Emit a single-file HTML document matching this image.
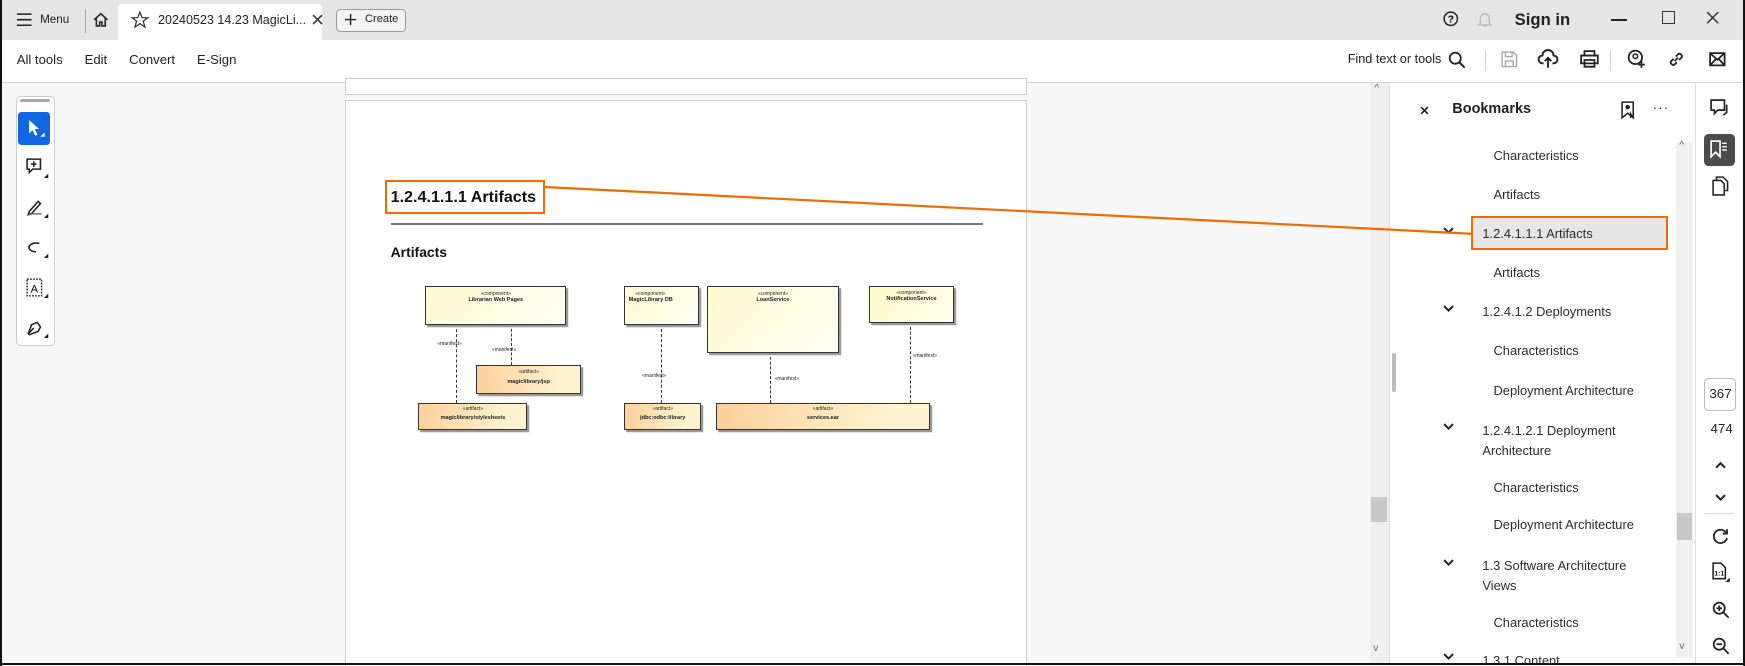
<!DOCTYPE html>
<html><head><meta charset="utf-8"><style>
*{box-sizing:border-box;margin:0;padding:0}
html,body{width:1745px;height:665px;overflow:hidden;background:#000}
#w{position:absolute;left:0;top:0;width:1568px;height:598px;zoom:1.11288;background:#f8f8f8;font-family:"Liberation Sans",sans-serif;color:#222;overflow:hidden}
.a{position:absolute}
.t{position:absolute;white-space:nowrap}
svg{position:absolute;overflow:visible}
.bm{position:absolute;font-size:11.6px;color:#2c2c2c;white-space:nowrap}
.comp{position:absolute;border:1px solid #333;background:linear-gradient(135deg,#fffbd0,#fffff4);box-shadow:2px 2px 0 #999;font-size:5px;text-align:center;font-weight:bold}
.art{position:absolute;border:1px solid #333;background:linear-gradient(90deg,#fdd09a,#fff3d0 80%);box-shadow:2px 2px 0 #999;font-size:5px;text-align:center;font-weight:bold}
.st{font-weight:normal;font-size:4.5px;display:block;margin-top:2px}
.dl{position:absolute;width:0;border-left:1px dashed #333}
.mf{position:absolute;font-size:4.5px}
</style></head><body><div id="w">
<div class="a" style="left:0;top:0;width:1568px;height:36px;background:#e6e6e6"></div>
<svg style="left:15px;top:12px" width="14" height="12"><path d="M0 1H13M0 6H13M0 11H13" stroke="#222" stroke-width="1.4"/></svg>
<div class="t" style="left:36px;top:12px;font-size:10.5px">Menu</div>
<div class="a" style="left:76px;top:8px;width:1px;height:22px;background:#aaa"></div>
<svg style="left:84px;top:11px" width="14" height="14"><path d="M1 7L7 1.5L13 7M3 5.5V12.5H6V9H8V12.5H11V5.5" fill="none" stroke="#222" stroke-width="1.4"/></svg>
<div class="a" style="left:106px;top:4px;width:183px;height:32px;background:#fff;border-radius:4px 4px 0 0"></div>
<svg style="left:118px;top:10px" width="16" height="16"><path d="M8 1L10 6H15L11 9.2L12.5 14.5L8 11.3L3.5 14.5L5 9.2L1 6H6Z" fill="none" stroke="#333" stroke-width="1.1"/></svg>
<div class="t" style="left:142px;top:12px;font-size:11.3px">20240523 14.23 MagicLi...</div>
<svg style="left:280px;top:13px" width="10" height="10"><path d="M1 1L9 9M9 1L1 9" stroke="#444" stroke-width="1.6"/></svg>
<div class="a" style="left:302px;top:8px;width:63px;height:21px;border:1px solid #999;border-radius:4px;background:#f3f3f3"></div>
<svg style="left:310px;top:13px" width="10" height="10"><path d="M5 0V10M0 5H10" stroke="#222" stroke-width="1.3"/></svg>
<div class="t" style="left:328px;top:12px;font-size:10px">Create</div>
<svg style="left:1297px;top:10px" width="14" height="14"><circle cx="7" cy="7" r="6" fill="none" stroke="#222" stroke-width="1.3"/><text x="7" y="10.5" font-size="9" text-anchor="middle" font-family="Liberation Sans" font-weight="bold">?</text></svg>
<svg style="left:1327px;top:10px" width="14" height="15"><path d="M3 11V6.5A4 4 0 0 1 11 6.5V11L12.5 12.5H1.5ZM5.5 13.5H8.5" fill="none" stroke="#bbb" stroke-width="1.2"/></svg>
<div class="t" style="left:1361px;top:9px;font-size:15px;font-weight:bold">Sign in</div>
<div class="a" style="left:1448px;top:17px;width:14px;height:1.5px;background:#222"></div>
<div class="a" style="left:1493px;top:10px;width:12px;height:12px;border:1.3px solid #333"></div>
<svg style="left:1533px;top:10px" width="12" height="12"><path d="M1 1L11 11M11 1L1 11" stroke="#333" stroke-width="1.3"/></svg>
<div class="a" style="left:0;top:36px;width:1568px;height:39px;background:#fff;border-bottom:1px solid #d4d4d4"></div>
<div class="t" style="left:15px;top:47px;font-size:11.8px">All tools</div>
<div class="t" style="left:76px;top:47px;font-size:11.8px">Edit</div>
<div class="t" style="left:116px;top:47px;font-size:11.8px">Convert</div>
<div class="t" style="left:177px;top:47px;font-size:11.8px">E-Sign</div>
<div class="t" style="left:1211px;top:47px;font-size:11.4px">Find text or tools</div>
<svg style="left:1301px;top:46px" width="16" height="16"><circle cx="6.5" cy="6.5" r="5" fill="none" stroke="#222" stroke-width="1.6"/><path d="M10 10L15 15" stroke="#222" stroke-width="1.8"/></svg>
<div class="a" style="left:1334px;top:45px;width:1px;height:19px;background:#ccc"></div>
<svg style="left:1349px;top:46px" width="15" height="15"><path d="M1 1H11L14 4V14H1ZM4 1V5H10V1M4 14V9H11V14" fill="none" stroke="#aaa" stroke-width="1.3"/></svg>
<svg style="left:1382px;top:45px" width="18" height="17"><path d="M5 12H4A3.5 3.5 0 0 1 4 5A5 5 0 0 1 14 5A3.5 3.5 0 0 1 14 12H13M9 16V7M6 10L9 7L12 10" fill="none" stroke="#222" stroke-width="1.7"/></svg>
<svg style="left:1420px;top:45px" width="17" height="16"><path d="M4 5V1H13V5M1 5H16V12H1ZM4 9H13V15H4Z" fill="none" stroke="#222" stroke-width="1.6"/></svg>
<div class="a" style="left:1447px;top:45px;width:1px;height:19px;background:#ccc"></div>
<svg style="left:1462px;top:44px" width="18" height="18"><circle cx="7.5" cy="7.5" r="6" fill="none" stroke="#222" stroke-width="1.6"/><circle cx="7.5" cy="6.5" r="2" fill="none" stroke="#222" stroke-width="1.4"/><path d="M13 11V17M10 14H16" stroke="#222" stroke-width="1.6"/></svg>
<svg style="left:1499px;top:46px" width="15" height="15"><path d="M6 9L9 6M5 7L2.5 9.5A2.5 2.5 0 0 0 5.5 12.5L8 10M7 5L9.5 2.5A2.5 2.5 0 0 1 12.5 5.5L10 8" fill="none" stroke="#222" stroke-width="1.6"/></svg>
<svg style="left:1536px;top:47px" width="15" height="13"><path d="M1 1H14V12H1ZM1 1L7.5 7L14 1M1 12L6 6.5M14 12L9 6.5" fill="none" stroke="#222" stroke-width="1.6"/></svg>
<div class="a" style="left:14px;top:86px;width:35px;height:225px;border:1px solid #ccc;border-radius:4px;background:#fff"></div>
<div class="a" style="left:18px;top:89px;width:27px;height:3px;border-radius:2px;background:#aaa"></div>
<div class="a" style="left:16px;top:101px;width:29px;height:29px;border-radius:3px;background:#1167df"></div>
<svg style="left:25px;top:107px" width="16" height="18"><path d="M1 1V13L4 10L6.5 15L8.5 14L6 9H10Z" fill="#fff"/><path d="M15 12V16H11Z" fill="#fff"/></svg>
<svg style="left:23px;top:142px" width="22" height="20"><path d="M1 1H13V10H6L3 13V10H1Z" fill="none" stroke="#222" stroke-width="1.4"/><path d="M7 3V8M4.5 5.5H9.5" stroke="#222" stroke-width="1.4"/><path d="M20 14V18H16Z" fill="#222"/></svg>
<svg style="left:23px;top:178px" width="22" height="20"><path d="M3 12L11 3L13 5L5 14L2 15Z" fill="none" stroke="#222" stroke-width="1.4"/><path d="M1 15L7 13.5H14V15Z" fill="#888"/><path d="M20 14V18H16Z" fill="#222"/></svg>
<svg style="left:23px;top:214px" width="22" height="20"><path d="M12 5A5.5 3.5 0 1 0 6 12L9 12.5" fill="none" stroke="#222" stroke-width="1.4"/><path d="M20 14V18H16Z" fill="#222"/></svg>
<svg style="left:23px;top:250px" width="22" height="20"><rect x="1" y="1" width="13" height="15" fill="none" stroke="#222" stroke-width="1.3" stroke-dasharray="1.5 1.2"/><text x="7.5" y="13" font-size="10" text-anchor="middle" font-family="Liberation Sans">A</text><path d="M20 14V18H16Z" fill="#222"/></svg>
<svg style="left:23px;top:286px" width="22" height="20"><path d="M2 14L5 6L10 4L13 8L11 12L3 15ZM2 14L7 9" fill="none" stroke="#222" stroke-width="1.4"/><path d="M20 14V18H16Z" fill="#222"/></svg>
<div class="a" style="left:310px;top:70px;width:613px;height:15px;background:#fff;border:1px solid #ccc"></div>
<div class="a" style="left:310px;top:90px;width:613px;height:520px;background:#fff;border:1px solid #ccc"></div>
<div class="a" style="left:346px;top:162px;width:144px;height:30px;border:2px solid #f06c00"></div>
<div class="t" style="left:351px;top:169px;font-size:14.5px;font-weight:bold;color:#111">1.2.4.1.1.1 Artifacts</div>
<div class="a" style="left:351px;top:200px;width:532px;height:2px;background:#777"></div>
<div class="t" style="left:351px;top:219px;font-size:12.5px;font-weight:bold;color:#111">Artifacts</div>
<div class="dl" style="left:410px;top:291px;height:71px"></div>
<div class="dl" style="left:459px;top:291px;height:37px"></div>
<div class="dl" style="left:594px;top:291px;height:71px"></div>
<div class="dl" style="left:692px;top:316px;height:46px"></div>
<div class="dl" style="left:818px;top:289px;height:73px"></div>
<div class="comp" style="left:382px;top:257px;width:127px;height:35px;padding-top:4px"><span class="st" style="margin:0">«component»</span>Librarian Web Pages</div>
<div class="comp" style="left:561px;top:257px;width:67px;height:35px;padding-top:4px;text-align:left;padding-left:3px"><span class="st" style="margin:0;padding-left:6px">«component»</span>MagicLibrary DB</div>
<div class="comp" style="left:635px;top:257px;width:119px;height:60px;padding-top:4px"><span class="st" style="margin:0">«component»</span>LoanService</div>
<div class="comp" style="left:781px;top:257px;width:76px;height:33px;padding-top:3px;background:linear-gradient(135deg,#fffbc8,#fffff0)"><span class="st" style="margin:0">«component»</span>NotificationService</div>
<div class="art" style="left:428px;top:328px;width:94px;height:26px;padding-top:3px"><span class="st" style="margin:0">«artifact»</span><span style="display:block;margin-top:3px">magiclibrary/jsp</span></div>
<div class="art" style="left:376px;top:362px;width:98px;height:24px;padding-top:2px"><span class="st" style="margin:0">«artifact»</span><span style="display:block;margin-top:3px">magiclibrary/stylesheets</span></div>
<div class="art" style="left:561px;top:362px;width:69px;height:24px;padding-top:2px"><span class="st" style="margin:0">«artifact»</span><span style="display:block;margin-top:3px">jdbc:odbc:library</span></div>
<div class="art" style="left:643px;top:362px;width:193px;height:24px;padding-top:2px"><span class="st" style="margin:0">«artifact»</span><span style="display:block;margin-top:3px">services.ear</span></div>
<div class="mf" style="left:393px;top:306px">«manifest»</div>
<div class="mf" style="left:442px;top:312px">«manifest»</div>
<div class="mf" style="left:577px;top:335px">«manifest»</div>
<div class="mf" style="left:696px;top:338px">«manifest»</div>
<div class="mf" style="left:820px;top:317px">«manifest»</div>
<div class="a" style="left:1231px;top:75px;width:17px;height:523px;background:#efefef"></div>
<div class="a" style="left:1232px;top:447px;width:14px;height:22px;background:#c8c8c8"></div>
<div class="t" style="left:1235px;top:75px;font-size:9px;color:#666">^</div>
<div class="t" style="left:1234px;top:578px;font-size:9px;color:#666">v</div>
<div class="a" style="left:1248px;top:75px;width:275px;height:523px;background:#fff;border-left:1px solid #ddd"></div>
<div class="a" style="left:1251px;top:317px;width:3px;height:35px;border-radius:2px;background:#bbb"></div>
<svg style="left:1276px;top:95px" width="8" height="8"><path d="M1 1L7 7M7 1L1 7" stroke="#222" stroke-width="1.5"/></svg>
<div class="t" style="left:1305px;top:91px;font-size:13px;font-weight:bold">Bookmarks</div>
<svg style="left:1457px;top:91px" width="14" height="17"><path d="M1 1H11V15L6 11L1 15Z" fill="none" stroke="#222" stroke-width="1.4"/><circle cx="6" cy="5.5" r="2" fill="#222"/><path d="M8 9V16L10 14L12 16" fill="#222"/></svg>
<div class="t" style="left:1485px;top:90px;font-size:12px;letter-spacing:1px">···</div>
<div class="a" style="left:1506px;top:128px;width:15px;height:462px;background:#f0f0f0"></div>
<div class="a" style="left:1507px;top:461px;width:13px;height:24px;background:#c8c8c8"></div>
<div class="t" style="left:1509px;top:126px;font-size:9px;color:#666">^</div>
<div class="t" style="left:1509px;top:576px;font-size:9px;color:#666">v</div>
<div class="a" style="left:1322px;top:194px;width:177px;height:31px;background:#e6e6e6;border:2px solid #f06c00"></div>
<svg style="left:1297px;top:204px" width="10" height="7"><path d="M1 1L5 5L9 1" fill="none" stroke="#222" stroke-width="1.8"/></svg>
<svg style="left:1297px;top:274px" width="10" height="7"><path d="M1 1L5 5L9 1" fill="none" stroke="#222" stroke-width="1.8"/></svg>
<svg style="left:1297px;top:380px" width="10" height="7"><path d="M1 1L5 5L9 1" fill="none" stroke="#222" stroke-width="1.8"/></svg>
<svg style="left:1297px;top:502px" width="10" height="7"><path d="M1 1L5 5L9 1" fill="none" stroke="#222" stroke-width="1.8"/></svg>
<svg style="left:1297px;top:587px" width="10" height="7"><path d="M1 1L5 5L9 1" fill="none" stroke="#222" stroke-width="1.8"/></svg>
<div class="bm" style="left:1342px;top:133px">Characteristics</div>
<div class="bm" style="left:1342px;top:168px">Artifacts</div>
<div class="bm" style="left:1332px;top:203px">1.2.4.1.1.1 Artifacts</div>
<div class="bm" style="left:1342px;top:238px">Artifacts</div>
<div class="bm" style="left:1332px;top:273px">1.2.4.1.2 Deployments</div>
<div class="bm" style="left:1342px;top:308px">Characteristics</div>
<div class="bm" style="left:1342px;top:344px">Deployment Architecture</div>
<div class="bm" style="left:1332px;top:378px;line-height:18px">1.2.4.1.2.1 Deployment<br>Architecture</div>
<div class="bm" style="left:1342px;top:431px">Characteristics</div>
<div class="bm" style="left:1342px;top:465px">Deployment Architecture</div>
<div class="bm" style="left:1332px;top:500px;line-height:18px">1.3 Software Architecture<br>Views</div>
<div class="bm" style="left:1342px;top:553px">Characteristics</div>
<div class="bm" style="left:1332px;top:587px">1.3.1 Content</div>
<div class="a" style="left:1523px;top:75px;width:45px;height:523px;background:#fff;border-left:1px solid #ddd"></div>
<svg style="left:1537px;top:89px" width="17" height="16"><path d="M1 1H13V10H7L4 13V10H1Z" fill="none" stroke="#222" stroke-width="1.5"/><path d="M15 5V12L12 14.5" fill="none" stroke="#222" stroke-width="1.5"/></svg>
<div class="a" style="left:1531px;top:120px;width:28px;height:29px;border-radius:4px;background:#4b4b4b"></div>
<svg style="left:1537px;top:126px" width="17" height="17"><path d="M1 1H9V15L5 11L1 15Z" fill="none" stroke="#fff" stroke-width="1.5"/><path d="M11 3H15M11 6H15M11 9H15" stroke="#fff" stroke-width="1.3"/></svg>
<svg style="left:1538px;top:158px" width="15" height="18"><path d="M4 4V1H10L14 5V13H11M1 4H8L11 7V17H1Z" fill="none" stroke="#222" stroke-width="1.4"/></svg>
<div class="a" style="left:1531px;top:340px;width:29px;height:29px;border:1px solid #bbb;border-radius:4px"></div>
<div class="t" style="left:1536px;top:347px;font-size:12px">367</div>
<div class="t" style="left:1537px;top:378px;font-size:12px">474</div>
<svg style="left:1541px;top:414px" width="10" height="7"><path d="M1 6L5 2L9 6" fill="none" stroke="#222" stroke-width="1.8"/></svg>
<svg style="left:1541px;top:444px" width="10" height="7"><path d="M1 1L5 5L9 1" fill="none" stroke="#222" stroke-width="1.8"/></svg>
<div class="a" style="left:1532px;top:461px;width:26px;height:1px;background:#ddd"></div>
<svg style="left:1538px;top:474px" width="15" height="15"><path d="M12.5 4A6 6 0 1 0 13.5 9" fill="none" stroke="#222" stroke-width="1.6"/><path d="M13.5 1V5H9.5" fill="none" stroke="#222" stroke-width="1.6"/></svg>
<svg style="left:1538px;top:505px" width="16" height="18"><path d="M1 1H8L12 5V15H1Z" fill="none" stroke="#222" stroke-width="1.4"/><text x="6.5" y="12" font-size="6" text-anchor="middle" font-family="Liberation Sans" font-weight="bold">1:1</text><path d="M16 14V18H12Z" fill="#222"/></svg>
<svg style="left:1538px;top:540px" width="16" height="16"><circle cx="6.5" cy="6.5" r="5" fill="none" stroke="#222" stroke-width="1.6"/><path d="M10 10L15 15M4 6.5H9M6.5 4V9" stroke="#222" stroke-width="1.6"/></svg>
<svg style="left:1538px;top:572px" width="16" height="16"><circle cx="6.5" cy="6.5" r="5" fill="none" stroke="#222" stroke-width="1.6"/><path d="M10 10L15 15M4 6.5H9" stroke="#222" stroke-width="1.6"/></svg>
<svg style="left:0;top:0" width="1568" height="598"><path d="M489 168L1322 210" stroke="#f06c00" stroke-width="2"/></svg>
<div class="a" style="left:0;top:0;width:2px;height:598px;background:#111"></div>
<div class="a" style="left:1566px;top:0;width:2px;height:598px;background:#111"></div>
<div class="a" style="left:0;top:596px;width:1568px;height:2px;background:#111"></div>
</div></body></html>
